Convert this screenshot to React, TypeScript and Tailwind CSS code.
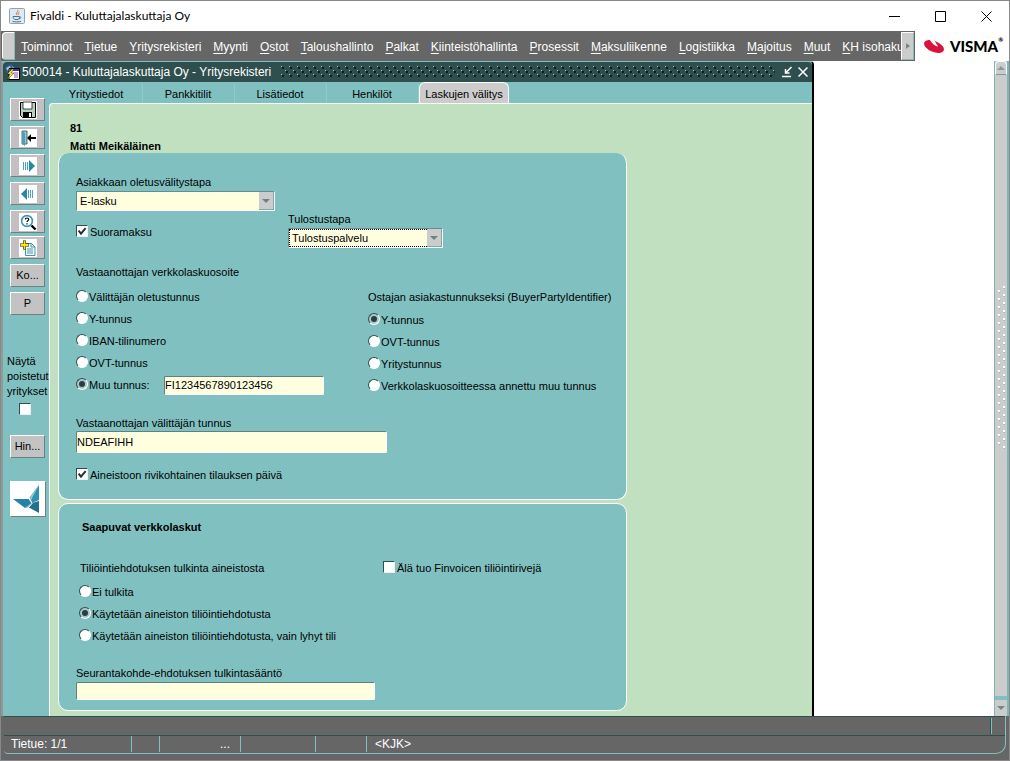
import type { ReactNode } from 'react';

const menus = [
  'Toiminnot', 'Tietue', 'Yritysrekisteri', 'Myynti', 'Ostot', 'Taloushallinto', 'Palkat',
  'Kiinteistöhallinta', 'Prosessit', 'Maksuliikenne', 'Logistiikka', 'Majoitus', 'Muut', 'KH isohaku',
];

const tabs = ['Yritystiedot', 'Pankkitilit', 'Lisätiedot', 'Henkilöt'];

function Radio({ name, label, checked }: { name: string; label: string; checked?: boolean }) {
  return (
    <label className="flex h-[22px] items-center gap-px">
      <span className="relative mb-[2px] flex h-3 w-3 shrink-0">
        <input
          type="radio"
          name={name}
          defaultChecked={checked}
          className="peer h-3 w-3 appearance-none rounded-full border border-t-[#2f4f4f] border-l-[#2f4f4f] border-r-white border-b-white bg-white checked:bg-[#a9c8c8]"
        />
        <span className="pointer-events-none absolute top-[3px] left-[3px] hidden h-[6px] w-[6px] rounded-full bg-[#263f42] peer-checked:block" />
      </span>
      <span className="whitespace-nowrap">{label}</span>
    </label>
  );
}

function Check({ label, checked }: { label: string; checked?: boolean }) {
  return (
    <label className="flex h-4 items-center gap-[2px]">
      <span className="relative mb-[2px] flex h-3 w-3 shrink-0">
        <input
          type="checkbox"
          defaultChecked={checked}
          className="peer h-3 w-3 appearance-none border border-t-[#2f4f4f] border-l-[#2f4f4f] border-r-[#e8f4f4] border-b-[#e8f4f4] bg-white"
        />
        <svg viewBox="0 0 12 12" className="pointer-events-none absolute inset-0 hidden h-3 w-3 peer-checked:block">
          <path d="M2.6 5.6 5 8.6 9.6 3.2" fill="none" stroke="#1f3336" strokeWidth="2" />
        </svg>
      </span>
      <span className="whitespace-nowrap">{label}</span>
    </label>
  );
}

function Combo({ id, label, value, width, focused }: { id: string; label: string; value: string; width: string; focused?: boolean }) {
  return (
    <div className={`flex flex-col ${width}`}>
      <label htmlFor={id} className="h-[17px] leading-4">{label}</label>
      <div className="relative h-5 border border-t-[#5f8f90] border-l-[#5f8f90] border-r-white border-b-white bg-[#ffffe0]">
        <select id={id} className="block h-full w-full appearance-none pl-[3px] text-[11px] leading-4">
          <option>{value}</option>
        </select>
        {focused && <span className="pointer-events-none absolute top-0 right-[15px] bottom-0 left-0 border-t border-b border-l border-dotted border-black" />}
        <span className="pointer-events-none absolute top-0 right-0 flex h-full w-[15px] items-center justify-center border-r border-b border-[#7fa8a8] bg-[#cccccc]">
          <svg viewBox="0 0 8 4" className="h-1 w-2"><path d="M0 0H8L4 4Z" fill="#6b8282" /></svg>
        </span>
      </div>
    </div>
  );
}

function Field({ id, label, value, width }: { id: string; label?: string; value: string; width: string }) {
  return (
    <input
      id={id}
      aria-label={label}
      defaultValue={value}
      className={`block rounded-[2px] border border-t-[#5f7f80] border-l-[#5f7f80] border-r-white border-b-white bg-[#ffffe0] text-[11px] ${width}`}
    />
  );
}

function ToolButton({ label, children }: { label: string; children: ReactNode }) {
  return (
    <button
      aria-label={label}
      className="flex h-[23px] w-[35px] shrink-0 items-center justify-center border border-t-white border-l-white border-r-[#6f7f7f] border-b-[#6f7f7f] bg-[#c3bfc2]"
    >
      {children}
    </button>
  );
}

function ToolIcon({ children }: { children: ReactNode }) {
  return <svg viewBox="0 0 18 18" className="h-[18px] w-[18px] bg-white">{children}</svg>;
}

function TextButton({ children }: { children: ReactNode }) {
  return (
    <button className="h-[23px] w-[35px] shrink-0 border border-t-white border-l-white border-r-[#6f7f7f] border-b-[#6f7f7f] bg-[#c3c3c3] text-[11px]">
      {children}
    </button>
  );
}

function Toolbar() {
  return (
    <aside className="flex w-[46px] shrink-0 flex-col pt-4 pl-[7px]">
      <div className="flex flex-col gap-[5px]">
        <ToolButton label="Tallenna">
          <ToolIcon>
            <path d="M1.5 1.5h15v15h-13l-2-2Z" fill="#b9cfc0" stroke="#000" />
            <path d="M4 1h9v7H4Z" fill="#fff" stroke="#000" strokeWidth=".7" />
            <path d="M4 11h9v6H4Z" fill="#000" />
            <path d="M10 12h2v4h-2Z" fill="#fff" />
          </ToolIcon>
        </ToolButton>
        <ToolButton label="Poistu">
          <ToolIcon>
            <path d="M3 2h5v13H3Z" fill="#8ccbd9" stroke="#444" strokeWidth=".8" />
            <path d="M3 2l3 2v13l-3-2Z" fill="#4c9fb6" />
            <path d="M8 9l4-4v3h5v2h-5v3Z" fill="#000" />
          </ToolIcon>
        </ToolButton>
        <ToolButton label="Seuraava">
          <ToolIcon>
            <path d="M4.5 5v8M6.5 5v8M8.5 5v8" stroke="#4ba3bc" />
            <path d="M10 3l6 6-6 6Z" fill="#2488a8" />
          </ToolIcon>
        </ToolButton>
        <ToolButton label="Edellinen">
          <ToolIcon>
            <path d="M13.5 5v8M11.5 5v8M9.5 5v8" stroke="#4ba3bc" />
            <path d="M8 3L2 9l6 6Z" fill="#2488a8" />
          </ToolIcon>
        </ToolButton>
        <ToolButton label="Hae">
          <ToolIcon>
            <circle cx="8" cy="8" r="5.4" fill="#fff" stroke="#3897b1" strokeWidth="1.6" />
            <path d="M6.3 6.5c0-2 3.4-2 3.4 0 0 1.1-1.7 1.1-1.7 2.6M8 10.2v1.3" fill="none" stroke="#000" strokeWidth="1.2" />
            <path d="M12.5 12.5l4 4" stroke="#000" strokeWidth="2.4" />
          </ToolIcon>
        </ToolButton>
      </div>
      <div className="mt-[3px] flex flex-col gap-[5px]">
        <ToolButton label="Uusi">
          <ToolIcon>
            <path d="M6.5 4.5h6l3.5 3.5v8.5h-9.5Z" fill="#fff" stroke="#3897b1" />
            <path d="M12 4v4h4M8 10h6M8 12h6M8 14h6" fill="none" stroke="#3897b1" />
            <path d="M1 6h9M5.5 1.5v9" stroke="#222" strokeWidth="3" />
            <path d="M1.5 6h8M5.5 2v8" stroke="#ffe500" strokeWidth="1.8" />
          </ToolIcon>
        </ToolButton>
        <TextButton>Ko...</TextButton>
        <TextButton>P</TextButton>
      </div>
      <label className="-ml-[3px] mt-[39px] flex flex-col leading-[15px]">
        <span className="w-10">Näytä poistetut yritykset</span>
        <input
          type="checkbox"
          className="mt-1 ml-3 h-3 w-3 appearance-none border border-t-[#2f4f4f] border-l-[#2f4f4f] border-r-[#e8f4f4] border-b-[#e8f4f4] bg-white checked:bg-[#2f4f4f]"
        />
      </label>
      <div className="mt-5 flex flex-col gap-[23px]">
        <TextButton>Hin...</TextButton>
        <button aria-label="Fivaldi" className="h-9 w-9 border border-t-white border-l-white border-r-[#6f7f7f] border-b-[#6f7f7f] bg-white">
          <svg viewBox="0 0 34 34" className="h-full w-full">
            <path d="M28 3V18L21 21L19 15Z" fill="#2f93b0" />
            <path d="M28 3L19 15l1 3Z" fill="#8cc8d8" />
            <path d="M2 17l16 0 3 4-7 5Z" fill="#2484a3" />
            <path d="M21 21l7-2v12L17 25Z" fill="#23708c" />
            <path d="M21 21l-7 5 4-.5Z" fill="#7dbdcf" />
            <path d="M18 16.5L21 21.5L16.5 26.5" fill="none" stroke="#fff" />
          </svg>
        </button>
      </div>
    </aside>
  );
}

function TitleBar() {
  return (
    <header className="flex h-[30px] shrink-0 items-center bg-white pl-2 font-['Lato',sans-serif] text-xs">
      <svg viewBox="0 0 16 16" className="h-4 w-4">
        <rect x=".5" y=".5" width="15" height="15" rx="1" fill="#dfe9f1" stroke="#8fa3b5" />
        <path d="M8.5 2c1.5 1.5-2.5 2.5-.5 5M10.5 4c-2 1-1.5 1.7-1 3" fill="none" stroke="#e0762f" />
        <path d="M4 8.5h6.5c0 1.5-.7 2.7-1.5 3H6c-1-.3-2-1.5-2-3ZM10.5 9c2-.4 2 1.7-.8 1.8M3.5 13.3c2 .8 6.5.8 8.5 0" fill="none" stroke="#4a7394" />
      </svg>
      <h1 className="ml-[5px] flex-1">Fivaldi - Kuluttajalaskuttaja Oy</h1>
      <div className="flex">
        <button aria-label="Pienennä" className="flex h-[29px] w-[46px] items-center justify-center">
          <svg viewBox="0 0 11 11" className="h-[11px] w-[11px]"><path d="M0 5.5h11" stroke="#000" /></svg>
        </button>
        <button aria-label="Suurenna" className="flex h-[29px] w-[46px] items-center justify-center">
          <svg viewBox="0 0 11 11" className="h-[11px] w-[11px]"><path d="M.5.5h10v10H.5Z" fill="none" stroke="#000" /></svg>
        </button>
        <button aria-label="Sulje" className="flex h-[29px] w-[46px] items-center justify-center">
          <svg viewBox="0 0 11 11" className="h-[11px] w-[11px]"><path d="M.5.5l10 10M10.5.5l-10 10" stroke="#000" /></svg>
        </button>
      </div>
    </header>
  );
}

function MenuBar() {
  return (
    <div className="flex h-[30px] shrink-0">
      <div className="flex min-w-0 flex-1 bg-[#666666] p-px">
        <span className="w-[13px] shrink-0 rounded-l border border-t-white border-l-white border-r-[#8fb5b5] border-b-[#8fb5b5] bg-[#cccccc]" />
        <nav className="flex min-w-0 flex-1 items-center gap-3 overflow-hidden pt-px pl-[6px] text-xs text-white">
          {menus.map((m) => (
            <button key={m} className="shrink-0 whitespace-nowrap">
              <span className="underline underline-offset-2">{m[0]}</span>{m.slice(1)}
            </button>
          ))}
        </nav>
        <button aria-label="Lisää valikoita" className="flex w-[13px] shrink-0 items-center justify-center border border-t-white border-l-white border-r-[#8fb5b5] border-b-[#8fb5b5] bg-[#cccccc]">
          <svg viewBox="0 0 4 6" className="h-[6px] w-1"><path d="M0 0l4 3-4 3Z" fill="#778888" /></svg>
        </button>
      </div>
      <div className="flex w-[94px] shrink-0 items-center gap-[5px] bg-white pl-2">
        <svg viewBox="0 0 22 16" className="h-4 w-[22px] shrink-0">
          <ellipse cx="11" cy="8.500" rx="10.500" ry="5.500" transform="rotate(22 11 8.500)" fill="#d8143c" />
          <path d="M6 0L12 1.500C11 3.500 14.500 6.500 15 8.500C12 8.500 8 4.500 6 0Z" fill="#fff" />
        </svg>
        <div className="flex items-start font-['Lato',sans-serif] font-black text-black">
          <span className="text-[15px] leading-5">VISMA</span>
          <span className="text-[6px] leading-[8px]">®</span>
        </div>
      </div>
    </div>
  );
}

function WindowTitle() {
  return (
    <div className="flex h-5 shrink-0 items-center rounded-t bg-[#2f4f4f] text-white">
      <svg viewBox="0 0 16 16" className="ml-px h-4 w-4">
        <circle cx="6" cy="5" r="4.5" fill="#3158b0" />
        <path d="M2 4l4-2 1 3-3 2ZM8 2l2 2-1 1Z" fill="#a9d5a0" />
        <path d="M5 4.5h10.5v11H5Z" fill="#fff" stroke="#000" />
        <path d="M5.5 5h9.5v2h-9.5Z" fill="#3737ad" />
        <path d="M10 9h4M10 11h4M10 13h4" stroke="#a13ca1" />
        <path d="M8 5l-5 5h3l-3 6 7-7H7l3-4Z" fill="#ffe83b" stroke="#000" strokeWidth=".4" />
      </svg>
      <h2 className="ml-[2px] text-xs whitespace-nowrap">500014 - Kuluttajalaskuttaja Oy - Yritysrekisteri</h2>
      <svg className="ml-[10px] h-3 min-w-0 flex-1">
        <defs>
          <pattern id="grip" width="8" height="8" patternUnits="userSpaceOnUse">
            <path d="M0 0h1v1H0ZM4 4h1v1H4Z" fill="#a9c8c8" />
            <path d="M1 1h2v2H1ZM5 5h2v2H5Z" fill="#0c1e1e" />
          </pattern>
        </defs>
        <rect width="100%" height="12" fill="url(#grip)" />
      </svg>
      <button aria-label="Palauta" className="ml-[6px]">
        <svg viewBox="0 0 12 12" className="h-3 w-3">
          <path d="M10.5 1L5 6.5M4.5 3v4h4M1 10.5h9" fill="none" stroke="#fff" strokeWidth="1.5" />
        </svg>
      </button>
      <button aria-label="Sulje ikkuna" className="mr-1 ml-[5px]">
        <svg viewBox="0 0 10 10" className="h-[10px] w-[10px]"><path d="M.5.5l9 9M9.5.5l-9 9" stroke="#fff" strokeWidth="1.5" /></svg>
      </button>
    </div>
  );
}

function TabBar() {
  return (
    <div role="tablist" className="flex h-[21px] shrink-0 pl-[2px]">
      {tabs.map((t) => (
        <button key={t} role="tab" aria-selected="false" className="w-[92px] rounded-tr border-r border-[#8fccca] pt-[3px] pr-px text-center">
          {t}
        </button>
      ))}
      <button role="tab" aria-selected="true" className="-mb-px w-[90px] rounded-t-md border border-b-0 border-white bg-[#cccccc] pt-px text-center">
        Laskujen välitys
      </button>
    </div>
  );
}

function InvoiceForm() {
  return (
    <form className="flex flex-1 flex-col rounded-tl border-t border-l border-white bg-[#c0e0c0] pt-[15px] pb-[5px] pl-2">
      <div className="pl-3 leading-[18px] font-bold">
        <p>81</p>
        <p className="-mb-[2px]">Matti Meikäläinen</p>
      </div>

      <section className="h-[347px] w-[569px] max-w-full rounded-[10px] border border-t-0 border-white bg-[#80c0c0] pt-[21px] pl-[17px]">
        <Combo id="tapa" label="Asiakkaan oletusvälitystapa" value="E-lasku" width="w-[199px]" />
        <div className="flex">
          <div className="w-[212px] pt-[13px]">
            <Check label="Suoramaksu" checked />
          </div>
          <Combo id="tulostus" label="Tulostustapa" value="Tulostuspalvelu" width="w-[155px]" focused />
        </div>
        <h3 className="mt-[14px] h-5 leading-5">Vastaanottajan verkkolaskuosoite</h3>
        <div className="flex">
          <div className="w-[292px] pt-1">
            <Radio name="osoite" label="Välittäjän oletustunnus" />
            <Radio name="osoite" label="Y-tunnus" />
            <Radio name="osoite" label="IBAN-tilinumero" />
            <Radio name="osoite" label="OVT-tunnus" />
            <div className="flex items-center">
              <div className="w-[88px]">
                <Radio name="osoite" label="Muu tunnus:" checked />
              </div>
              <Field id="muu" label="Muu tunnus" value="FI1234567890123456" width="w-[160px] h-[19px]" />
            </div>
          </div>
          <div className="pt-1">
            <h3 className="h-[23px] leading-[22px] whitespace-nowrap">Ostajan asiakastunnukseksi (BuyerPartyIdentifier)</h3>
            <Radio name="ostaja" label="Y-tunnus" checked />
            <Radio name="ostaja" label="OVT-tunnus" />
            <Radio name="ostaja" label="Yritystunnus" />
            <Radio name="ostaja" label="Verkkolaskuosoitteessa annettu muu tunnus" />
          </div>
        </div>
        <label htmlFor="valittaja" className="mt-[18px] block h-4 leading-4">Vastaanottajan välittäjän tunnus</label>
        <Field id="valittaja" value="NDEAFIHH" width="w-[311px] h-[22px]" />
        <div className="mt-[14px]">
          <Check label="Aineistoon rivikohtainen tilauksen päivä" checked />
        </div>
      </section>

      <section className="mt-[3px] h-[208px] w-[569px] max-w-full rounded-[10px] border border-white bg-[#80c0c0] pt-[15px] pl-[17px]">
        <h3 className="pl-[6px] leading-4 font-bold">Saapuvat verkkolaskut</h3>
        <div className="mt-[25px] flex items-center pl-1">
          <h4 className="w-[303px] leading-4">Tiliöintiehdotuksen tulkinta aineistosta</h4>
          <Check label="Älä tuo Finvoicen tiliöintirivejä" />
        </div>
        <div className="mt-[5px] pl-[3px]">
          <Radio name="tulkinta" label="Ei tulkita" />
          <Radio name="tulkinta" label="Käytetään aineiston tiliöintiehdotusta" checked />
          <Radio name="tulkinta" label="Käytetään aineiston tiliöintiehdotusta, vain lyhyt tili" />
        </div>
        <label htmlFor="saanto" className="mt-[18px] block h-[17px] leading-4">Seurantakohde-ehdotuksen tulkintasääntö</label>
        <Field id="saanto" value="" width="w-[299px] h-[18px]" />
      </section>
    </form>
  );
}

function ScrollBar() {
  return (
    <div className="flex w-[15px] shrink-0 flex-col items-center justify-between border-r-2 border-l border-[#80b5b8] bg-[#cccccc]">
      <button aria-label="Vieritä ylös" className="flex h-[14px] w-full items-center justify-center rounded-t border border-b-[#7a9a9a] border-white">
        <svg viewBox="0 0 8 4" className="h-1 w-2"><path d="M0 4H8L4 0Z" fill="#889999" /></svg>
      </button>
      <svg className="mb-9 h-[164px] w-2">
        <defs>
          <pattern id="thumb" width="8" height="8" patternUnits="userSpaceOnUse">
            <path d="M6 0h2v2H6ZM1 4h2v2H1Z" fill="#fff" />
            <path d="M7 2h1v1H7ZM2 6h1v1H2Z" fill="#8fb5b5" />
          </pattern>
        </defs>
        <rect width="8" height="164" fill="url(#thumb)" />
      </svg>
      <button aria-label="Vieritä alas" className="flex h-5 w-full items-center justify-center rounded-b border-t-4 border-[#80c0c0]">
        <svg viewBox="0 0 8 4" className="h-1 w-2"><path d="M0 0H8L4 4Z" fill="#778888" /></svg>
      </button>
    </div>
  );
}

function StatusBar() {
  return (
    <footer className="h-11 shrink-0 bg-[#666666] pr-[3px] pl-[3px] text-xs text-white">
      <div className="h-[38px] rounded-br-[10px] rounded-bl border-r border-b border-[#80c0c0]">
        <div className="flex h-5 justify-end border-t border-b border-[#2f4f4f] pr-[13px]">
          <span className="my-px border-r border-l border-l-[#2f4f4f] border-r-[#80c0c0]" />
        </div>
        <div className="flex h-4 items-center leading-4">
          <span className="w-32 border-r border-[#80c0c0] pl-[7px]">Tietue: 1/1</span>
          <span className="h-4 w-7 border-r border-[#80c0c0]" />
          <span className="w-[81px] border-r border-[#80c0c0] pr-[10px] text-right">...</span>
          <span className="h-4 w-[75px] border-r border-[#80c0c0]" />
          <span className="h-4 w-[51px] border-r border-[#80c0c0]" />
          <span className="pl-2">&lt;KJK&gt;</span>
        </div>
      </div>
    </footer>
  );
}

export default function App() {
  return (
    <div className="flex min-h-screen flex-col border border-[#888888] bg-white font-['Liberation_Sans',Arial,sans-serif] text-[11px] text-black">
      <TitleBar />
      <MenuBar />
      <div className="flex flex-1 justify-between">
        <main className="flex max-w-[813px] min-w-0 flex-1 flex-col rounded-tr border-t border-r-2 border-l-2 border-t-[#80c0c0] border-r-black border-l-[#8c9c9c] bg-[#80c0c0]">
          <WindowTitle />
          <div className="flex flex-1">
            <Toolbar />
            <div className="flex min-w-0 flex-1 flex-col">
              <TabBar />
              <InvoiceForm />
            </div>
          </div>
        </main>
        <ScrollBar />
      </div>
      <StatusBar />
    </div>
  );
}
